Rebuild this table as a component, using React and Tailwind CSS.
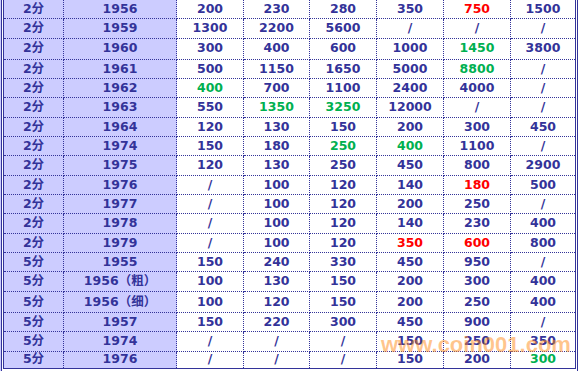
const R = 'text-[#ff0000]'
const G = 'text-[#00b050]'

const rows = [
  ['2分', '1956', '200', '230', '280', '350', ['750', R], '1500'],
  ['2分', '1959', '1300', '2200', '5600', '/', '/', '/'],
  ['2分', '1960', '300', '400', '600', '1000', ['1450', G], '3800'],
  ['2分', '1961', '500', '1150', '1650', '5000', ['8800', G], '/'],
  ['2分', '1962', ['400', G], '700', '1100', '2400', '4000', '/'],
  ['2分', '1963', '550', ['1350', G], ['3250', G], '12000', '/', '/'],
  ['2分', '1964', '120', '130', '150', '200', '300', '450'],
  ['2分', '1974', '150', '180', ['250', G], ['400', G], '1100', '/'],
  ['2分', '1975', '120', '130', '250', '450', '800', '2900'],
  ['2分', '1976', '/', '100', '120', '140', ['180', R], '500'],
  ['2分', '1977', '/', '100', '120', '200', '250', '/'],
  ['2分', '1978', '/', '100', '120', '140', '230', '400'],
  ['2分', '1979', '/', '100', '120', ['350', R], ['600', R], '800'],
  ['5分', '1955', '150', '240', '330', '450', '950', '/'],
  ['5分', '1956（粗）', '100', '130', '150', '200', '300', '400'],
  ['5分', '1956（细）', '100', '120', '150', '200', '250', '400'],
  ['5分', '1957', '150', '220', '300', '450', '900', '/'],
  ['5分', '1974', '/', '/', '/', '150', '250', '350'],
  ['5分', '1976', '/', '/', '/', '150', '200', ['300', G]],
]

// most rows are ~19px, a couple are taller in the screenshot
const rowH = (i) => {
  if (i === 2 || i === 15) return 'h-[21px]'
  if (i === 18) return 'h-[17px]'
  return 'h-[19.35px]'
}

const cellBase = 'border border-dotted border-[#333399] p-0 text-center align-middle leading-none whitespace-nowrap'

export default function App() {
  return (
    <div className="relative h-[371px] w-[580px] overflow-hidden border-l border-l-[#ccccff] bg-white font-['DejaVu_Sans','Noto_Sans_CJK_SC',sans-serif] text-[12.5px] font-bold text-[#333399]">
      <div className="-mt-[1px] w-[577px] border-x border-b border-[#333399] bg-white px-[1px] pb-[2px]">
        <table className="w-[573px] table-fixed border-collapse border border-solid border-[#333399]">
          <colgroup>
            <col className="w-[60px]" />
            <col className="w-[113px]" />
            <col className="w-[67px]" />
            <col className="w-[66px]" />
            <col className="w-[67px]" />
            <col className="w-[67px]" />
            <col className="w-[67px]" />
            <col className="w-[65px]" />
          </colgroup>
          <tbody>
            {rows.map((r, i) => (
              <tr key={i} className={rowH(i)}>
                {r.map((c, j) => {
                  const [txt, color] = Array.isArray(c) ? c : [c, '']
                  const bg = j < 2 ? 'bg-[#ccccff]' : 'bg-white'
                  return (
                    <td key={j} className={`${cellBase} ${bg} ${color}`}>
                      {txt}
                    </td>
                  )
                })}
              </tr>
            ))}
          </tbody>
        </table>
      </div>
      <div className="pointer-events-none absolute left-[380px] top-[334px] font-['Liberation_Sans',sans-serif] text-[22px] font-bold leading-[22px] text-[#ff8c1a]/50">
        www.coin001.com
      </div>
    </div>
  )
}
